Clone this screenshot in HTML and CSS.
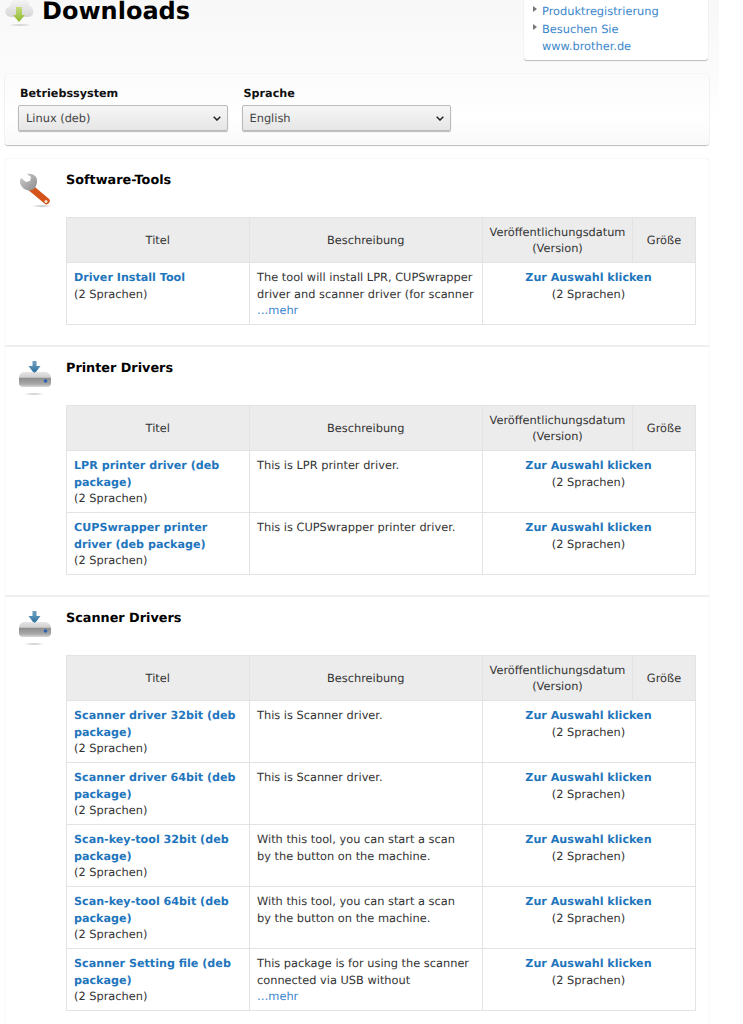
FILE: index.html
```html
<!DOCTYPE html>
<html lang="de">
<head>
<meta charset="utf-8">
<title>Downloads</title>
<link rel="stylesheet" href="styles.css">
</head>
<body>
<div class="page">
  <header class="top">
    <div class="title-wrap">
      <svg class="cloud" width="36" height="36" viewBox="0 0 36 36">
        <defs>
          <linearGradient id="cg" x1="0" y1="0" x2="0" y2="1"><stop offset="0" stop-color="#f6f6f6"/><stop offset="1" stop-color="#d6d6d6"/></linearGradient>
          <linearGradient id="ca" x1="0" y1="0" x2="0" y2="1"><stop offset="0" stop-color="#c6dc80"/><stop offset="1" stop-color="#8db92e"/></linearGradient>
          <radialGradient id="cs"><stop offset="0" stop-color="#c4c4c4"/><stop offset="1" stop-color="#c4c4c4" stop-opacity="0"/></radialGradient>
        </defs>
        <ellipse cx="15" cy="33" rx="12" ry="1.300" fill="url(#cs)"/>
        <path d="M7 25c-8 0-9-9-2-11 0-6 7-9 11-6 5-2 9 2 8 6 6 1 6 11-1 11z" fill="url(#cg)"/>
        <path d="M11 15h6v8h3l-6 7-6-7h3z" fill="url(#ca)"/>
      </svg>
      <h1>Downloads</h1>
    </div>
    <ul class="side-links">
      <li><a href="#">Produktregistrierung</a></li>
      <li><a href="#">Besuchen Sie www.brother.de</a></li>
    </ul>
  </header>

  <section class="filter">
    <div class="field">
      <label for="os">Betriebssystem</label>
      <select id="os"><option>Linux (deb)</option></select>
    </div>
    <div class="field">
      <label for="lang">Sprache</label>
      <select id="lang"><option>English</option></select>
    </div>
  </section>

  <main class="panel">
    <section class="group">
      <svg class="gicon" width="36" height="36" viewBox="0 0 36 36">
        <defs>
          <linearGradient id="wg" x1="0" y1="0" x2="1" y2="1"><stop offset="0" stop-color="#d0d0d0"/><stop offset="1" stop-color="#8a8a8a"/></linearGradient>
          <radialGradient id="ws"><stop offset="0" stop-color="#bbb"/><stop offset="1" stop-color="#bbb" stop-opacity="0"/></radialGradient>
          <linearGradient id="dg" x1="0" y1="0" x2="0" y2="1"><stop offset="0" stop-color="#e6e6e6"/><stop offset=".35" stop-color="#cfcfcf"/><stop offset=".42" stop-color="#8f8f8f"/><stop offset=".8" stop-color="#a8a8a8"/><stop offset="1" stop-color="#d8d8d8"/></linearGradient>
          <linearGradient id="da" x1="0" y1="0" x2="0" y2="1"><stop offset="0" stop-color="#6fa3c4"/><stop offset="1" stop-color="#2f6f9c"/></linearGradient>
        </defs>
        <ellipse cx="24" cy="33" rx="10" ry="1.500" fill="url(#ws)"/>
        <path d="M13 15 28.500 28" stroke="#d4531a" stroke-width="6.500" stroke-linecap="round"/>
        <circle cx="28" cy="28.500" r="1.500" fill="#f5e6dc"/>
        <path d="M16 16c-3 2-8 2-11-1C2 12 1 8 3 5l5 4 4-1 1-4-4-3c3-1 7 0 9 3 2 3 1 9-2 12z" fill="url(#wg)"/>
      </svg>
      <div class="gbody">
        <h2>Software-Tools</h2>
        <table>
          <colgroup><col class="c1"><col class="c2"><col class="c3"><col class="c4"></colgroup>
          <thead><tr><th>Titel</th><th>Beschreibung</th><th>Veröffentlichungsdatum<br>(Version)</th><th>Größe</th></tr></thead>
          <tbody>
            <tr><td><a class="strong" href="#">Driver Install Tool</a><br>(2 Sprachen)</td><td class="desc">The tool will install LPR, CUPSwrapper driver and scanner driver (for scanner <a class="more" href="#">…mehr</a></td><td colspan="2" class="mid"><a class="strong" href="#">Zur Auswahl klicken</a><br>(2 Sprachen)</td></tr>
          </tbody>
        </table>
      </div>
    </section>

    <section class="group">
      <svg class="gicon" width="36" height="36" viewBox="0 0 36 36">
        <ellipse cx="16" cy="33" rx="11" ry="1.200" fill="url(#ws)"/>
        <path d="M14.500 0h4v5h4L16.500 13l-6-8h4z" fill="url(#da)"/>
        <path d="M1 17c0-3 2-6 5-6h21c3 0 6 3 6 6v5c0 2-1 4-4 4H5c-3 0-4-2-4-4z" fill="url(#dg)"/>
        <path d="M13.500 8h6l-3 4z" fill="#3b7ba6"/>
        <circle cx="27.500" cy="20" r="1.800" fill="#2a62b5"/>
      </svg>
      <div class="gbody">
        <h2>Printer Drivers</h2>
        <table>
          <colgroup><col class="c1"><col class="c2"><col class="c3"><col class="c4"></colgroup>
          <thead><tr><th>Titel</th><th>Beschreibung</th><th>Veröffentlichungsdatum<br>(Version)</th><th>Größe</th></tr></thead>
          <tbody>
            <tr><td><a class="strong" href="#">LPR printer driver (deb package)</a><br>(2 Sprachen)</td><td class="desc">This is LPR printer driver.</td><td colspan="2" class="mid"><a class="strong" href="#">Zur Auswahl klicken</a><br>(2 Sprachen)</td></tr>
            <tr><td><a class="strong" href="#">CUPSwrapper printer driver (deb package)</a><br>(2 Sprachen)</td><td class="desc">This is CUPSwrapper printer driver.</td><td colspan="2" class="mid"><a class="strong" href="#">Zur Auswahl klicken</a><br>(2 Sprachen)</td></tr>
          </tbody>
        </table>
      </div>
    </section>

    <section class="group">
      <svg class="gicon" width="36" height="36" viewBox="0 0 36 36">
        <ellipse cx="16" cy="33" rx="11" ry="1.200" fill="url(#ws)"/>
        <path d="M14.500 0h4v5h4L16.500 13l-6-8h4z" fill="url(#da)"/>
        <path d="M1 17c0-3 2-6 5-6h21c3 0 6 3 6 6v5c0 2-1 4-4 4H5c-3 0-4-2-4-4z" fill="url(#dg)"/>
        <path d="M13.500 8h6l-3 4z" fill="#3b7ba6"/>
        <circle cx="27.500" cy="20" r="1.800" fill="#2a62b5"/>
      </svg>
      <div class="gbody">
        <h2>Scanner Drivers</h2>
        <table>
          <colgroup><col class="c1"><col class="c2"><col class="c3"><col class="c4"></colgroup>
          <thead><tr><th>Titel</th><th>Beschreibung</th><th>Veröffentlichungsdatum<br>(Version)</th><th>Größe</th></tr></thead>
          <tbody>
            <tr><td><a class="strong" href="#">Scanner driver 32bit (deb package)</a><br>(2 Sprachen)</td><td class="desc">This is Scanner driver.</td><td colspan="2" class="mid"><a class="strong" href="#">Zur Auswahl klicken</a><br>(2 Sprachen)</td></tr>
            <tr><td><a class="strong" href="#">Scanner driver 64bit (deb package)</a><br>(2 Sprachen)</td><td class="desc">This is Scanner driver.</td><td colspan="2" class="mid"><a class="strong" href="#">Zur Auswahl klicken</a><br>(2 Sprachen)</td></tr>
            <tr><td><a class="strong" href="#">Scan-key-tool 32bit (deb package)</a><br>(2 Sprachen)</td><td class="desc">With this tool, you can start a scan<br>by the button on the machine.</td><td colspan="2" class="mid"><a class="strong" href="#">Zur Auswahl klicken</a><br>(2 Sprachen)</td></tr>
            <tr><td><a class="strong" href="#">Scan-key-tool 64bit (deb package)</a><br>(2 Sprachen)</td><td class="desc">With this tool, you can start a scan<br>by the button on the machine.</td><td colspan="2" class="mid"><a class="strong" href="#">Zur Auswahl klicken</a><br>(2 Sprachen)</td></tr>
            <tr><td><a class="strong" href="#">Scanner Setting file (deb package)</a><br>(2 Sprachen)</td><td class="desc">This package is for using the scanner connected via USB without <a class="more" href="#">…mehr</a></td><td colspan="2" class="mid"><a class="strong" href="#">Zur Auswahl klicken</a><br>(2 Sprachen)</td></tr>
          </tbody>
        </table>
      </div>
    </section>
  </main>
</div>
</body>
</html>
```
FILE: styles.css
```css
html, body { margin: 0; padding: 0; background: #fff; height: 1024px; overflow: hidden; }
body { font-family: "DejaVu Sans", sans-serif; font-size: 11.36px; line-height: 16.5px; color: #333; text-rendering: geometricPrecision; }
.page { width: 719px; height: 1100px; background: linear-gradient(#f7f7f7 0, #fbfbfb 90px, #fff 140px); margin-top: -20px; padding: 0 10px 0 5px; box-sizing: border-box; }
a { color: #3b87cc; text-decoration: none; }
a.strong { color: #1f76bd; font-weight: bold; font-size: 11.150px; line-height: 1; }
a.more { display: block; }
.top { display: flex; justify-content: space-between; height: 94px; }
.title-wrap { display: flex; align-items: flex-start; margin-top: 14px; gap: 1px; }
.cloud { margin-top: -2px; }
h1 { margin: 0; font-size: 24px; line-height: 35px; color: #000; font-weight: bold; }
.side-links { list-style: none; margin: 0 1px 0 0; padding: 0 12px 6px 18px; width: 184px; height: 80px; box-sizing: border-box; background: #fff; border-radius: 0 0 3px 3px; box-shadow: 0 1px 1px #bbb; display: flex; flex-direction: column; justify-content: flex-end; }
.side-links li { position: relative; margin-top: 1.500px; }
.side-links li::before { content: ""; position: absolute; left: -9px; top: 3px; border-left: 4px solid #777; border-top: 3.500px solid transparent; border-bottom: 3.500px solid transparent; }
.filter { display: flex; gap: 14px; height: 71px; box-sizing: border-box; padding: 11px 13px; border-radius: 3px; background: linear-gradient(#fbfbfb, #fff 60%, #f9f9f9); box-shadow: 0 0 1px #ccc, 0 1px 1px #bbb; width: 704px; }
.field { display: flex; flex-direction: column; }
label { font-weight: bold; font-size: 11.200px; line-height: 18px; color: #111; height: 20px; margin-left: 2px; }
select { appearance: none; width: 209.500px; height: 26px; font: 11.36px "DejaVu Sans", sans-serif; text-rendering: geometricPrecision; color: #444; border: 1px solid #bbb; border-radius: 2px; background: url("data:image/svg+xml,%3Csvg xmlns='http://www.w3.org/2000/svg' width='8' height='5'%3E%3Cpath d='M.7.7 4 4l3.300-3.300' fill='none' stroke='%23222' stroke-width='1.500'/%3E%3C/svg%3E") no-repeat right 6px center, linear-gradient(#f6f6f6, #e6e6e6); padding: 0 7px; box-shadow: 0 1px 1px #bbb; }
.panel { margin-top: 14px; width: 704px; box-shadow: 0 0 1px #ccc; border-radius: 3px; background: #fff; }
.group { display: flex; padding: 9px 12px 20px 13px; gap: 12px; border-bottom: 2px solid #eee; }
.group:last-child { border-bottom: 0; }
.gicon { flex: none; width: 36px; height: 36px; margin-top: 5px; }
.gbody { width: 630px; }
h2 { margin: 2.500px 0 26.500px; font-size: 12.800px; line-height: 20px; color: #000; font-weight: bold; }
table { width: 629px; table-layout: fixed; border-collapse: collapse; }
.c1 { width: 182.500px; } .c2 { width: 233.500px; } .c3 { width: 150px; } .c4 { width: 63px; }
th { background: #ececec; font-weight: normal; border: 1px solid #e3e3e3; padding: 5px; height: 34px; text-align: center; }
td { border: 1px solid #e3e3e3; padding: 6px 8px 5.500px 7px; vertical-align: top; }
td.desc { padding-left: 7.500px; }
td.mid { text-align: center; }
```
